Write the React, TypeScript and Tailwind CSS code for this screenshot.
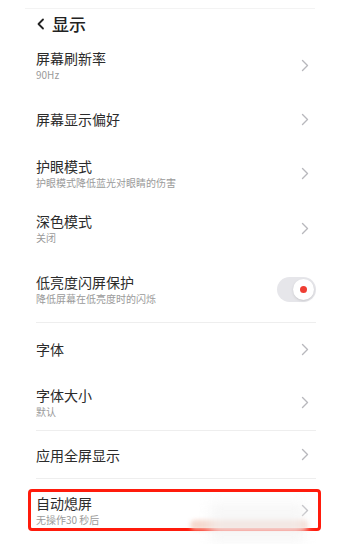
import React from 'react'

const font = { fontFamily: '"Noto Sans CJK SC", "Noto Sans", sans-serif' }

const Chevron = () => (
  <svg width="8" height="13" viewBox="0 0 8 13" fill="none" className="shrink-0">
    <path d="M1.5 1.5 L6.5 6.5 L1.5 11.5" stroke="#b8b8bd" strokeWidth="1.4" strokeLinecap="round" strokeLinejoin="round" />
  </svg>
)

const Back = () => (
  <svg width="9" height="12" viewBox="0 0 9 12" fill="none" className="shrink-0 mr-[7px]">
    <path d="M7 1.5 L2.5 6 L7 10.5" stroke="#222" strokeWidth="1.8" strokeLinecap="round" strokeLinejoin="round" />
  </svg>
)

const Row = ({ title, sub, h = 'h-[54px]' }: { title: string; sub?: string; h?: string }) => (
  <div className={`flex items-center justify-between pl-9 pr-[31px] ${h}`}>
    <div className="flex flex-col">
      <span className="text-[14px] leading-[18px] text-[#2b2b2b]">{title}</span>
      {sub && <span className="text-[10px] leading-[14px] text-[#9a9a9a] mt-[1px]">{sub}</span>}
    </div>
    <Chevron />
  </div>
)

const Toggle = () => (
  <div className="w-[39px] h-[25px] rounded-full bg-[#e6e6ea] flex items-center justify-end pr-[2px]">
    <div className="w-[21px] h-[21px] rounded-full bg-white flex items-center justify-center shadow-sm">
      <div className="w-[7px] h-[7px] rounded-full bg-[#ef3e33]" />
    </div>
  </div>
)

const Divider = () => <div className="mx-9 mr-[24px] h-px bg-[#eeeeee]" />

export default function App() {
  return (
    <div className="relative w-[340px] h-[544px] bg-white overflow-hidden" style={font}>
      <div className="mx-[25px] mt-2 h-px bg-[#f3f3f3]" />
      <div className="flex items-center h-[29px] pl-[36px]">
        <Back />
        <span className="text-[17px] text-[#222] leading-none font-medium">显示</span>
      </div>
      <Row title="屏幕刷新率" sub="90Hz" />
      <Row title="屏幕显示偏好" />
      <Row title="护眼模式" sub="护眼模式降低蓝光对眼睛的伤害" h="h-[55px]" />
      <Row title="深色模式" sub="关闭" h="h-[55px]" />
      <div className="flex items-center justify-between pl-9 pr-[24px] h-[66px]">
        <div className="flex flex-col">
          <span className="text-[14px] leading-[18px] text-[#2b2b2b]">低亮度闪屏保护</span>
          <span className="text-[10px] leading-[14px] text-[#9a9a9a] mt-[1px]">降低屏幕在低亮度时的闪烁</span>
        </div>
        <Toggle />
      </div>
      <Divider />
      <Row title="字体" h="h-[52px]" />
      <Row title="字体大小" sub="默认" h="h-[55px]" />
      <Divider />
      <Row title="应用全屏显示" h="h-[47px]" />
      <Divider />
      <div className="mt-[10px] mx-[28px] mr-[19px] h-[42px] border-[3px] border-[#ff1b0c] rounded-[4px] flex items-center justify-between pl-[5px] pr-[9px]">
        <div className="flex flex-col">
          <span className="text-[14px] leading-[17px] text-[#2b2b2b]">自动熄屏</span>
          <span className="text-[10px] leading-[12px] text-[#9a9a9a] mt-[2px]">无操作30 秒后</span>
        </div>
        <Chevron />
      </div>
      <div className="absolute left-[190px] top-[520px] w-[118px] h-[10px] rounded-full bg-[#f3cfc2] blur-[2px] opacity-80" />
      <div className="absolute left-[210px] top-[503px] w-[95px] h-[40px] bg-[#f2f2f2] blur-[6px] opacity-60" />
    </div>
  )
}
